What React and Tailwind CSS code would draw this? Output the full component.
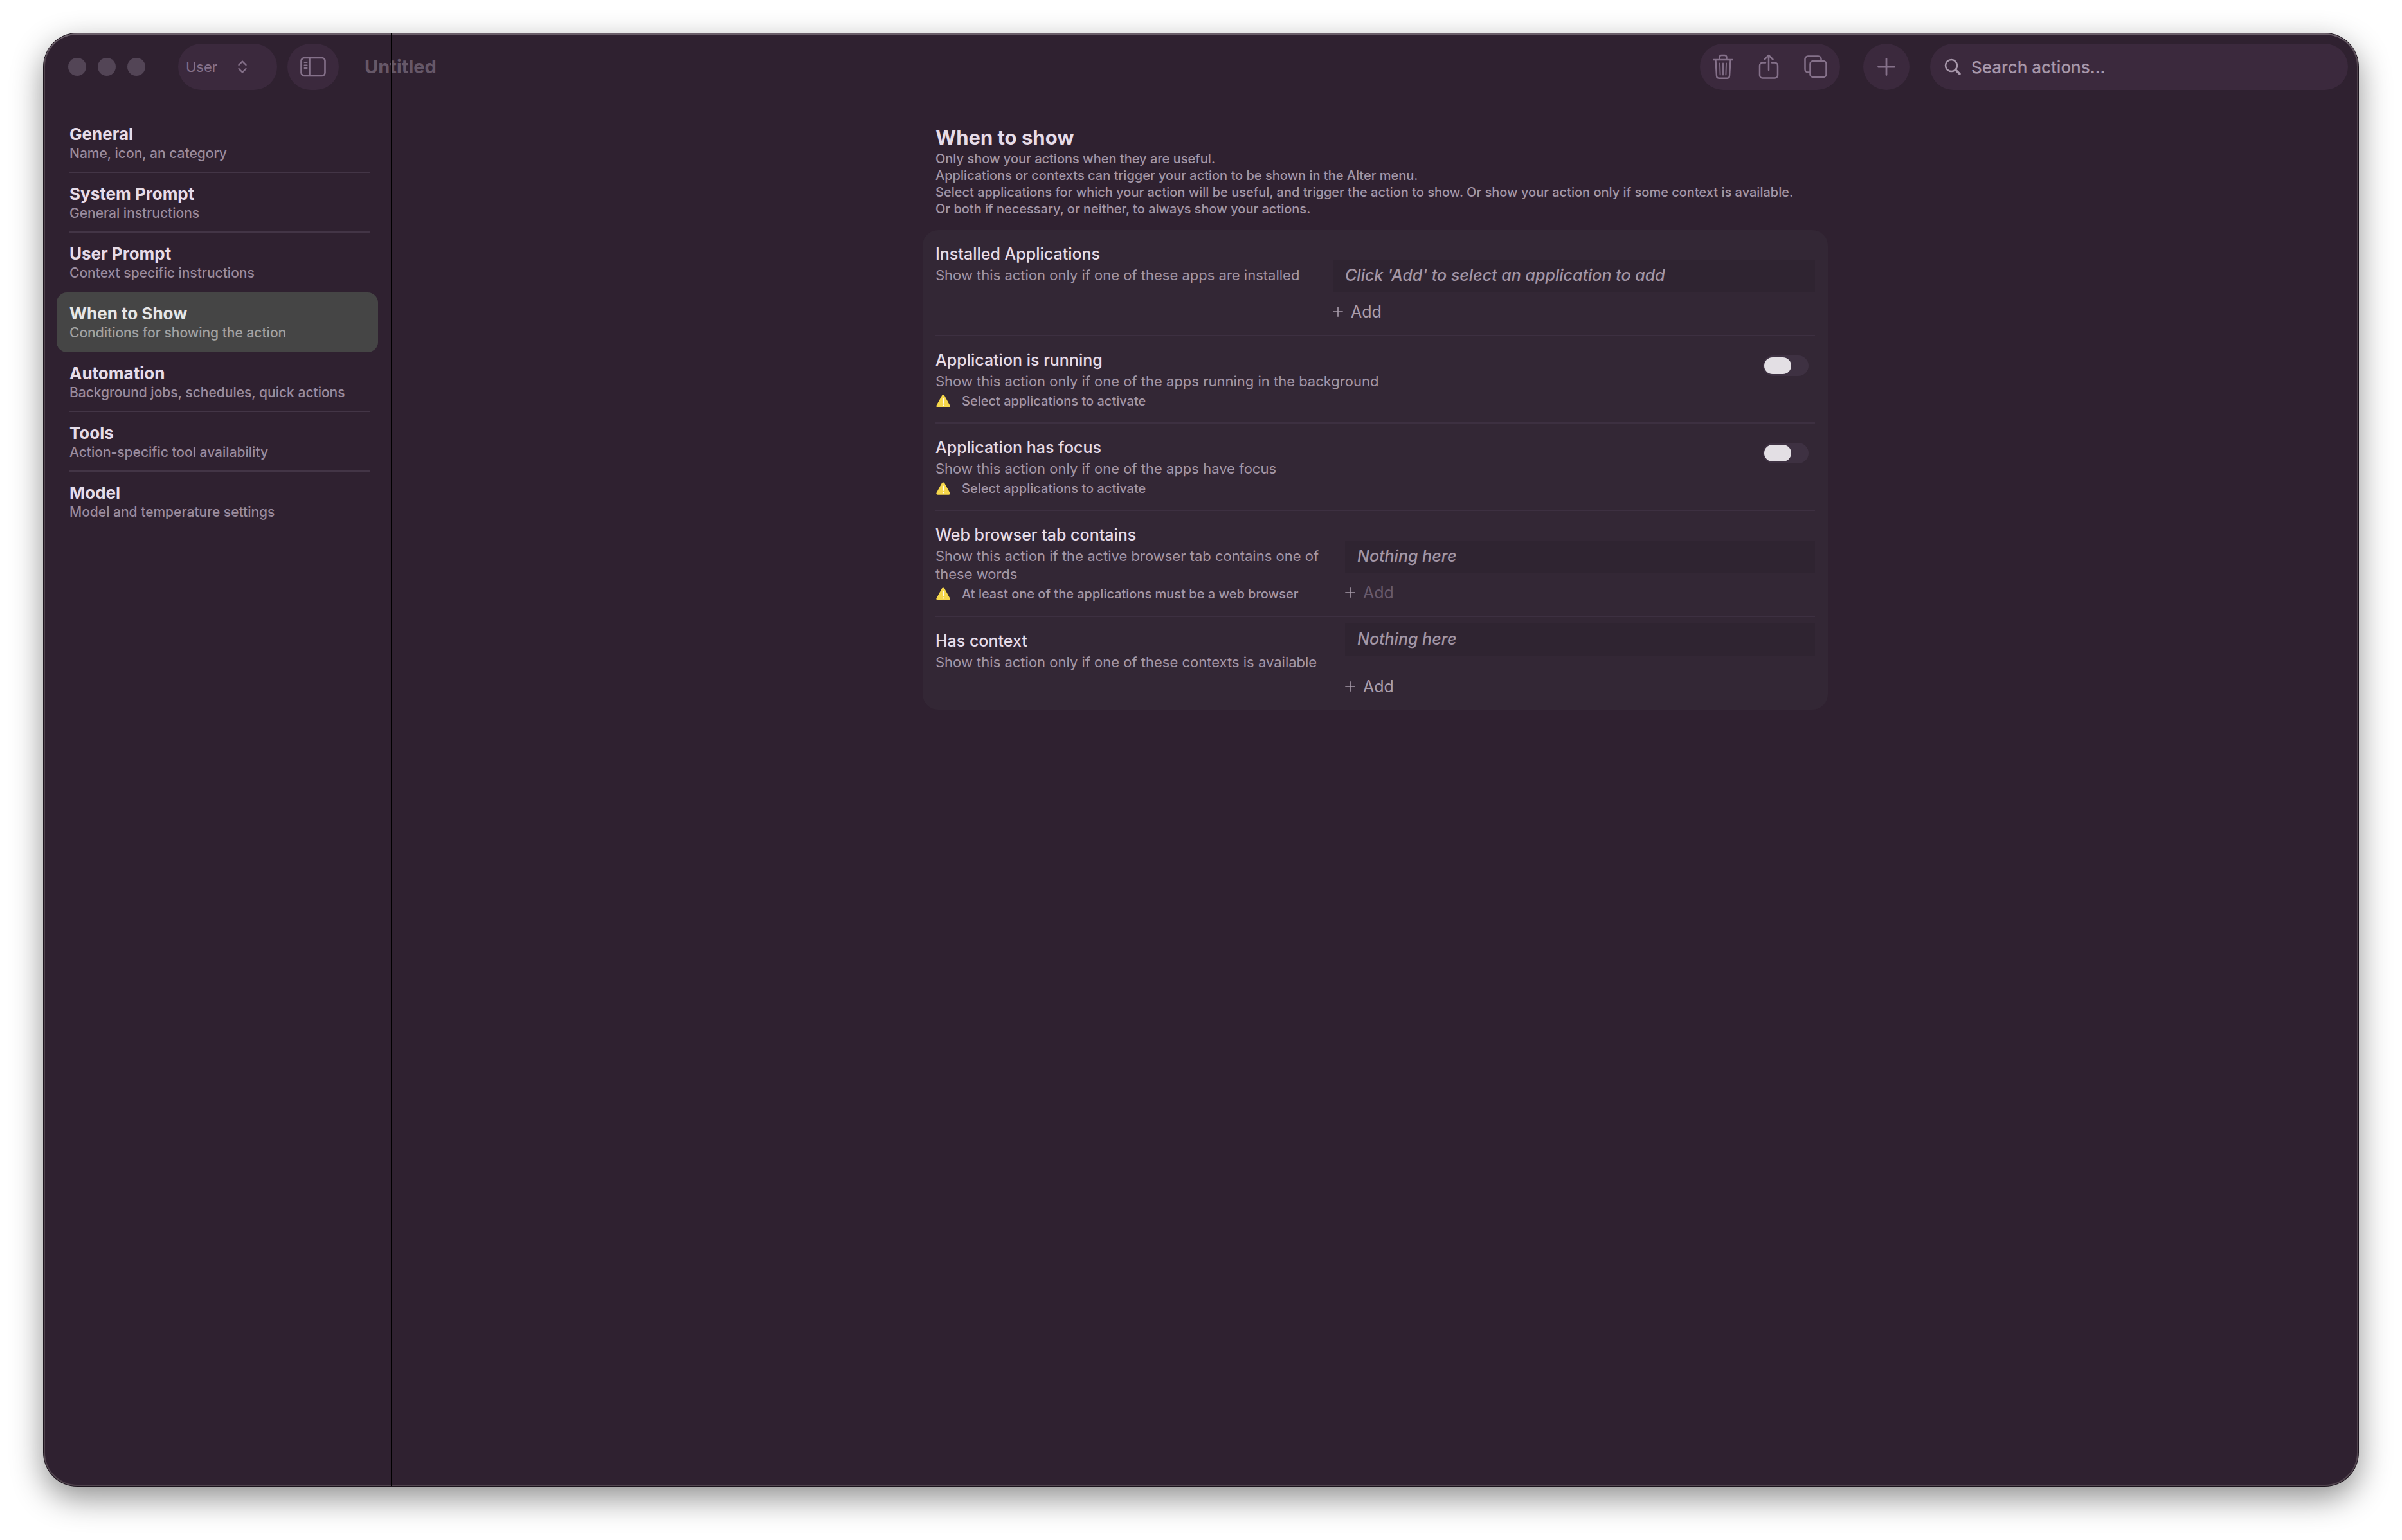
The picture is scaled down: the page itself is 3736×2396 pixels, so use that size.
import React, { useState } from 'react';

const SECTIONS = [
  { title: 'General', subtitle: 'Name, icon, an category' },
  { title: 'System Prompt', subtitle: 'General instructions' },
  { title: 'User Prompt', subtitle: 'Context specific instructions' },
  { title: 'When to Show', subtitle: 'Conditions for showing the action' },
  { title: 'Automation', subtitle: 'Background jobs, schedules, quick actions' },
  { title: 'Tools', subtitle: 'Action-specific tool availability' },
  { title: 'Model', subtitle: 'Model and temperature settings' },
];

const SidebarIcon = () => (
  <svg className="w-10 h-8" viewBox="0 0 40 32" fill="none" stroke="currentColor" strokeWidth="2.6" strokeLinecap="round">
    <rect x="1.5" y="2" width="37" height="28" rx="5" />
    <path d="M14.5 2v28" strokeLinecap="butt" />
    <path d="M6.500 9h4M6.500 13.500h4M6.500 18h4" strokeWidth="2" />
  </svg>
);

const ChevronsIcon = () => (
  <svg className="w-4 h-5" viewBox="0 0 16 20" fill="none" stroke="currentColor" strokeWidth="2.4" strokeLinecap="round" strokeLinejoin="round">
    <path d="M2.500 7 8 1.500 13.500 7M2.500 13 8 18.500 13.500 13" />
  </svg>
);

const TrashIcon = () => (
  <svg className="w-8 h-10" viewBox="0 0 32 40" fill="none" stroke="currentColor" strokeWidth="2.4" strokeLinecap="round" strokeLinejoin="round">
    <path d="M1.500 9h29M10.500 9V5a3 3 0 0 1 3-3h5a3 3 0 0 1 3 3v4" />
    <path d="M4.500 9.500 6 34.500a3.500 3.500 0 0 0 3.500 3.200h13a3.500 3.500 0 0 0 3.500-3.200L27.500 9.500" />
    <path d="M11 14.500l.6 18M16 14.500v18M21 14.500l-.6 18" strokeWidth="1.900" />
  </svg>
);

const ShareIcon = () => (
  <svg className="w-8 h-10" viewBox="0 0 32 40" fill="none" stroke="currentColor" strokeWidth="2.500" strokeLinecap="round" strokeLinejoin="round">
    <path d="M11 13.500H6.500a4.500 4.500 0 0 0-4.500 4.500v15a4.500 4.500 0 0 0 4.500 4.500h19a4.500 4.500 0 0 0 4.500-4.500V18a4.500 4.500 0 0 0-4.500-4.500H21" />
    <path d="M16 25V2.500M9.500 8.500l6.500-6.500 6.500 6.500" />
  </svg>
);

const CopyIcon = () => (
  <svg className="w-9 h-9" viewBox="0 0 36 36" fill="none" stroke="currentColor" strokeWidth="2.500" strokeLinejoin="round">
    <rect x="9.500" y="9" width="25" height="25" rx="4.500" />
    <path d="M9.500 26.500H6A4.500 4.500 0 0 1 1.500 22V6A4.500 4.500 0 0 1 6 1.500h16A4.500 4.500 0 0 1 26.500 6v3" />
  </svg>
);

const PlusIcon = ({ className }) => (
  <svg className={className} viewBox="0 0 28 28" fill="none" stroke="currentColor" strokeWidth="2.800" strokeLinecap="round">
    <path d="M14 1.500v25M1.500 14h25" />
  </svg>
);

const SearchIcon = () => (
  <svg className="w-[26px] h-[26px] shrink-0" viewBox="0 0 26 26" fill="none" stroke="currentColor" strokeWidth="2.600" strokeLinecap="round">
    <circle cx="11" cy="11" r="9" />
    <path d="M18 18l6 6" strokeWidth="3.400" />
  </svg>
);

const WarningIcon = () => (
  <svg className="w-[22px] h-5 shrink-0" viewBox="0 0 22 20">
    <path d="M9 1.600a2.300 2.300 0 0 1 4 0l8.300 14.800a2.200 2.200 0 0 1-2 3.400H2.700a2.200 2.200 0 0 1-2-3.400z" fill="#f6d74b" />
    <path d="M11 6.500v6.500" stroke="#fff" strokeWidth="1.800" strokeLinecap="round" />
    <circle cx="11" cy="16.400" r="1.100" fill="#fff" />
  </svg>
);

const Toolbar = () => (
  <header className="col-span-2 col-start-1 row-start-1 flex items-center h-[104px] pl-[38px] pr-4 text-[#85718a]">
    <div className="flex gap-[18px]">
      <button aria-label="Close" className="size-7 rounded-full bg-[#534556]" />
      <button aria-label="Minimize" className="size-7 rounded-full bg-[#534556]" />
      <button aria-label="Zoom" className="size-7 rounded-full bg-[#534556]" />
    </div>

    <div className="relative ml-[51px] h-[72px] w-[154px] rounded-full bg-[#3b293d]">
      <select aria-label="Action scope" className="size-full appearance-none rounded-full pl-3 text-[22px] outline-none">
        <option>User</option>
      </select>
      <span className="pointer-events-none absolute inset-y-0 right-[46px] flex items-center">
        <ChevronsIcon />
      </span>
    </div>

    <button aria-label="Toggle sidebar" className="ml-4 flex h-[72px] w-20 items-center justify-center rounded-full bg-[#3b293d]">
      <SidebarIcon />
    </button>

    <h1 className="ml-10 text-[29px] font-bold text-[#665868]">Untitled</h1>

    <div className="ml-auto flex h-[72px] w-[218px] items-center justify-between rounded-full bg-[#3b293d] px-5">
      <button aria-label="Delete"><TrashIcon /></button>
      <button aria-label="Share"><ShareIcon /></button>
      <button aria-label="Duplicate"><CopyIcon /></button>
    </div>

    <button aria-label="New action" className="ml-9 flex size-[72px] items-center justify-center rounded-full bg-[#3b293d]">
      <PlusIcon className="size-7" />
    </button>

    <label className="ml-8 flex h-[72px] w-[650px] items-center gap-4 rounded-full bg-[#3b293d] px-[22px] text-[#a898ab]">
      <SearchIcon />
      <input
        type="text"
        aria-label="Search actions"
        placeholder="Search actions..."
        className="min-w-0 flex-1 text-[26px] font-medium outline-none placeholder:text-[#a898ab]"
      />
    </label>
  </header>
);

const SectionLink = ({ section, selected, divided, onClick }) => (
  <button
    onClick={onClick}
    className={`block h-[93px] w-full rounded-2xl pl-5 pr-3 text-left ${selected ? 'bg-[#454545]' : ''}`}
  >
    <span className={`flex h-full flex-col border-b-2 pt-[17px] ${divided ? 'border-[#433546]' : 'border-transparent'}`}>
      <span className={`text-[26px] leading-8 font-bold ${selected ? 'text-[#e6e6e6]' : 'text-[#e6dce8]'}`}>
        {section.title}
      </span>
      <span className={`text-[21px] leading-7 font-medium ${selected ? 'text-[#a2a2a2]' : 'text-[#9a8b9d]'}`}>
        {section.subtitle}
      </span>
    </span>
  </button>
);

const Switch = ({ label }) => (
  <input
    type="checkbox"
    role="switch"
    aria-label={label}
    className="mt-[30px] mr-2.5 h-8 w-[71px] shrink-0 appearance-none rounded-full bg-[#3e3142] px-0.5 py-[3px] before:block before:h-[26px] before:w-[42px] before:rounded-full before:bg-[#e3dfe4] checked:before:ml-[22px]"
  />
);

const AddButton = ({ disabled }) => (
  <button disabled={disabled} className="flex w-fit items-center gap-3 text-[25px] leading-8 text-[#a99dac]">
    <PlusIcon className="size-4" />
    <span className={disabled ? 'text-[#685a6c]' : ''}>Add</span>
  </button>
);

const EmptyList = ({ children }) => (
  <div className="flex h-[50px] items-center bg-[#2f2431] px-[19px] text-[25px] font-medium italic text-[#a396a6]">
    {children}
  </div>
);

const Condition = ({ title, description, warning, last, children }) => (
  <div className={`flex ${last ? '' : 'border-b-2 border-[#3d3041]'}`}>
    <div className="min-w-0 flex-1 py-5">
      <h3 className="text-[25px] leading-[34px] font-medium text-[#e6dce8]">{title}</h3>
      <p className="mt-0.5 text-[22px] leading-7 text-[#a396a6]">{description}</p>
      {warning && (
        <p className="mt-1 flex items-center gap-[18px] pl-px text-[20px] leading-[26px] font-medium text-[#a396a6]">
          <WarningIcon />
          {warning}
        </p>
      )}
    </div>
    {children}
  </div>
);

const App = () => {
  const [current, setCurrent] = useState(3);

  return (
    <div className="flex min-h-screen bg-white px-[68px] pt-[52px] pb-[84px] font-['Inter',sans-serif]">
      <div className="grid flex-1 grid-cols-[542px_1fr] grid-rows-[104px_1fr] rounded-[52px] bg-[#2f2130] shadow-[inset_0_2px_0_0_#6a5e69,inset_0_0_0_2px_#52454f,0_0_0_1px_#1c141d,0_18px_50px_rgba(0,0,0,0.45)]">
        <Toolbar />

        <aside className="pointer-events-none col-start-1 row-span-2 row-start-1 border-r-2 border-black pt-[124px]">
          <nav className="pointer-events-auto px-5">
            {SECTIONS.map((section, index) => (
              <SectionLink
                key={section.title}
                section={section}
                selected={index === current}
                divided={index !== current && index + 1 !== current && index < SECTIONS.length - 1}
                onClick={() => setCurrent(index)}
              />
            ))}
          </nav>
        </aside>

        <main className="col-start-2 row-start-2 pt-[38px]">
          <div className="mx-auto w-full max-w-[1408px]">
            <div className="px-5">
              <h2 className="text-[31px] leading-10 font-bold text-[#e6dce8]">When to show</h2>
              <p className="text-[20px] leading-[26px] font-medium text-[#a396a6]">
                Only show your actions when they are useful.
                <br />
                Applications or contexts can trigger your action to be shown in the Alter menu.
                <br />
                Select applications for which your action will be useful, and trigger the action to show. Or show your action only if some context is available.
                <br />
                Or both if necessary, or neither, to always show your actions.
              </p>
            </div>

            <section className="mt-5 rounded-3xl bg-[#332735] px-5">
              <Condition
                title="Installed Applications"
                description="Show this action only if one of these apps are installed"
              >
                <div className="flex w-[750px] flex-col gap-[15px] pt-[46px] pb-5">
                  <EmptyList>Click 'Add' to select an application to add</EmptyList>
                  <AddButton />
                </div>
              </Condition>

              <Condition
                title="Application is running"
                description="Show this action only if one of the apps running in the background"
                warning="Select applications to activate"
              >
                <Switch label="Application is running" />
              </Condition>

              <Condition
                title="Application has focus"
                description="Show this action only if one of the apps have focus"
                warning="Select applications to activate"
              >
                <Switch label="Application has focus" />
              </Condition>

              <Condition
                title="Web browser tab contains"
                description="Show this action if the active browser tab contains one of these words"
                warning="At least one of the applications must be a web browser"
              >
                <div className="flex w-[731px] flex-col gap-[15px] pt-[46px] pb-5">
                  <EmptyList>Nothing here</EmptyList>
                  <AddButton disabled />
                </div>
              </Condition>

              <Condition
                title="Has context"
                description="Show this action only if one of these contexts is available"
                last
              >
                <div className="flex w-[731px] flex-col gap-8 pt-2.5 pb-5">
                  <EmptyList>Nothing here</EmptyList>
                  <AddButton />
                </div>
              </Condition>
            </section>
          </div>
        </main>
      </div>
    </div>
  );
};

export default App;
